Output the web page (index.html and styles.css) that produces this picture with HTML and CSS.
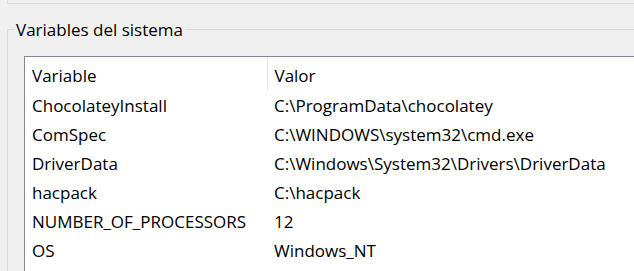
FILE: index.html
```html
<!DOCTYPE html>
<html lang="es">
<head>
    <meta charset="UTF-8">
    <title>Variables de entorno</title>
    <link rel="stylesheet" href="styles.css">
</head>
<body>
    <div class="user-group"></div>

    <fieldset class="group">
        <legend>Variables del sistema</legend>
        <div class="list">
            <table class="vars">
                <thead>
                    <tr>
                        <th class="col-name">Variable</th>
                        <th>Valor</th>
                    </tr>
                </thead>
                <tbody>
                    <tr><td>ChocolateyInstall</td><td>C:\ProgramData\chocolatey</td></tr>
                    <tr><td>ComSpec</td><td>C:\WINDOWS\system32\cmd.exe</td></tr>
                    <tr><td>DriverData</td><td>C:\Windows\System32\Drivers\DriverData</td></tr>
                    <tr><td>hacpack</td><td>C:\hacpack</td></tr>
                    <tr><td>NUMBER_OF_PROCESSORS</td><td>12</td></tr>
                    <tr><td>OS</td><td>Windows_NT</td></tr>
                </tbody>
            </table>
        </div>
    </fieldset>
</body>
</html>
```

FILE: styles.css
```css
* {
    margin: 0;
    padding: 0;
    box-sizing: border-box;
}

html, body {
    height: 100%;
    overflow: hidden;
}

body {
    background: #f0f0f0;
    font-family: "Open Sans", "Noto Sans", Arial, sans-serif;
    font-size: 17px;
    color: #000;
    padding-left: 7px;
}

/* bottom edge of the user variables group above */
.user-group {
    height: 4px;
    border-left: 1px solid #dcdcdc;
    border-bottom: 1px solid #dcdcdc;
    margin-right: -10px;
}

.group {
    margin-top: 16px;
    margin-right: -20px;
    border: none;
    border-top: 1px solid #dcdcdc;
    border-left: 1px solid #dcdcdc;
    padding: 0;
    height: 400px;
}

.group legend {
    margin-left: 7px;
    padding: 1px 2px 0 1px;
    font-size: 17px;
    line-height: 17px;
}

.list {
    margin: 18px 0 0 16px;
    background: #fff;
    border-top: 1px solid #828790;
    border-left: 1px solid #828790;
    height: 300px;
}

.vars {
    border-collapse: collapse;
}

.vars th {
    font-weight: normal;
    text-align: left;
    height: 34px;
    padding: 2px 0 0 7px;
    vertical-align: middle;
}

.vars th.col-name {
    width: 242px;
    border-right: 1px solid #e5e5e5;
}

.vars td {
    height: 29px;
    padding: 0 0 0 7px;
    white-space: nowrap;
}
```
